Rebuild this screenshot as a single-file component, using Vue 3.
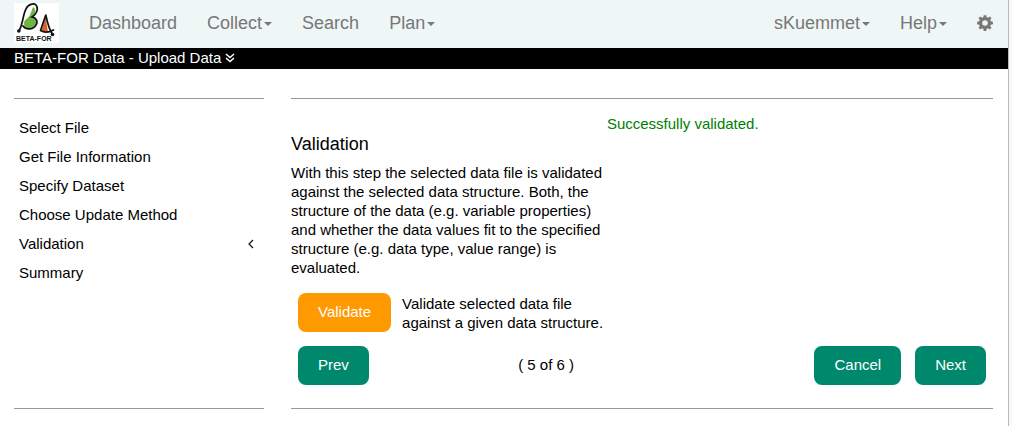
<script setup>
const leftNav = [
  { label: 'Dashboard', menu: false },
  { label: 'Collect', menu: true },
  { label: 'Search', menu: false },
  { label: 'Plan', menu: true },
]
const rightNav = [
  { label: 'sKuemmet', menu: true },
  { label: 'Help', menu: true },
]
const steps = [
  'Select File',
  'Get File Information',
  'Specify Dataset',
  'Choose Update Method',
  'Validation',
  'Summary',
]
const current = 4
</script>

<template>
  <div class="page">
    <header class="navbar">
      <a href="#" class="brand" aria-label="BETA-FOR home">
        <svg width="45" height="40" viewBox="0 0 45 40" aria-hidden="true">
          <rect width="45" height="40" fill="#fff" />
          <path d="M19 4C22 6 22 10 19 13C24 15 23 21 20 23C16 27 10 26 10 21C10 16 14 16 16 12Z" fill="#6fb544" />
          <path d="M5 28C9 21 9 11 12 6C14 1 20 0 22 2C25 6 22 12 18 14C23 15 24 19 22 22C19 27 12 27 9 23" fill="none" stroke="#111" stroke-width="1.7" stroke-linecap="round" />
          <circle cx="4.8" cy="28" r="1.8" fill="#111" />
          <path d="M31.5 14L34 29L27.5 27.5Z" fill="#d9622b" />
          <path d="M38.5 31.5C35 26 33 18 31.8 12L26.5 27.5Q32 31 39.5 27" fill="none" stroke="#111" stroke-width="1.7" stroke-linecap="round" stroke-linejoin="round" />
          <circle cx="38.5" cy="31.5" r="1.8" fill="#111" />
          <text x="2" y="38" class="logo-text">BETA-FOR</text>
        </svg>
      </a>
      <nav class="links" aria-label="Main">
        <a v-for="item in leftNav" :key="item.label" href="#">{{ item.label }}<span v-if="item.menu" class="caret"></span></a>
      </nav>
      <nav class="links account" aria-label="Account">
        <a v-for="item in rightNav" :key="item.label" href="#">{{ item.label }}<span v-if="item.menu" class="caret"></span></a>
        <a href="#" class="gear" aria-label="Settings">
          <svg width="16" height="16" viewBox="0 0 16 16" aria-hidden="true">
            <path fill="#777" fill-rule="evenodd" d="M6.7 0.2H9.3L9.7 2.3L11 2.8L12.8 1.6L14.5 3.3L13.2 5L13.8 6.3L15.9 6.7V9.3L13.8 9.7L13.2 11L14.5 12.8L12.8 14.5L11 13.2L9.7 13.8L9.3 15.9H6.7L6.3 13.8L5 13.2L3.2 14.5L1.5 12.8L2.8 11L2.2 9.7L0.1 9.3V6.7L2.2 6.3L2.8 5L1.5 3.2L3.2 1.5L5 2.8L6.3 2.2ZM8 5.2A2.8 2.8 0 1 0 8 10.8A2.8 2.8 0 1 0 8 5.2Z" />
          </svg>
        </a>
      </nav>
    </header>

    <div class="titlebar">
      <span>BETA-FOR Data - Upload Data</span>
      <svg width="10" height="10" viewBox="0 0 10 10" fill="none" stroke="#fff" stroke-width="1.5" aria-hidden="true">
        <path d="M1 1L5 4.6L9 1M1 5L5 8.6L9 5" />
      </svg>
    </div>

    <div class="content">
      <aside class="sidebar">
        <ul>
          <li v-for="(step, i) in steps" :key="step">
            <span>{{ step }}</span>
            <svg v-if="i === current" width="6" height="10" viewBox="0 0 6 10" fill="none" stroke="#111" stroke-width="1.2" aria-hidden="true">
              <path d="M5 1L1 5L5 9" />
            </svg>
          </li>
        </ul>
      </aside>

      <main class="wizard">
        <div class="columns">
          <section class="explain">
            <h2>Validation</h2>
            <p>
              With this step the selected data file is validated against the selected data structure. Both, the
              structure of the data (e.g. variable properties) and whether the data values fit to the specified
              structure (e.g. data type, value range) is evaluated.
            </p>
            <div class="action">
              <button type="button" class="btn orange">Validate</button>
              <span>Validate selected data file against a given data structure.</span>
            </div>
          </section>
          <p class="status" role="status">Successfully validated.</p>
        </div>
        <footer class="pager">
          <div><button type="button" class="btn">Prev</button></div>
          <span class="count">( 5 of 6 )</span>
          <div class="end">
            <button type="button" class="btn">Cancel</button>
            <button type="button" class="btn">Next</button>
          </div>
        </footer>
      </main>
    </div>
  </div>
</template>

<style>
body {
  background: #f8f8f8;
}
</style>

<style scoped>
.page {
  box-sizing: border-box;
  min-height: 100vh;
  margin-right: 3px;
  border-right: 1px solid #bbb;
  background: #fff;
  color: #000;
  font: 15px/19px "Liberation Sans", Arial, sans-serif;
}

.navbar {
  display: flex;
  align-items: center;
  height: 48px;
  padding: 0 15px 0 14px;
  background: #eef6f6;
}

.brand {
  display: flex;
  margin: 0 30px 2px 0;
}

.logo-text {
  font: bold 7px "Liberation Sans", Arial, sans-serif;
  fill: #111;
}

.links {
  display: flex;
  align-items: center;
  gap: 30px;
  padding-bottom: 2px;
  font-size: 18px;
  line-height: 20px;
}

.links a {
  display: flex;
  align-items: center;
  color: #777;
  text-decoration: none;
}

.account {
  margin-left: auto;
}

.caret {
  margin: 2px 0 0 2px;
  border-top: 4px solid #777;
  border-right: 4px solid transparent;
  border-left: 4px solid transparent;
}

.titlebar {
  display: flex;
  align-items: center;
  gap: 4px;
  padding: 0 14px 2px;
  background: #000;
  color: #fff;
}

.content {
  display: grid;
  grid-template-columns: 250fr 702fr;
  gap: 27px;
  padding: 29px 15px 17px 14px;
}

.sidebar,
.wizard {
  border-top: 1px solid #999;
  border-bottom: 1px solid #999;
}

.sidebar ul {
  margin: 0;
  padding: 14px 10px 0 5px;
  list-style: none;
}

.sidebar li {
  display: flex;
  align-items: center;
  justify-content: space-between;
  height: 29px;
}

.columns {
  display: grid;
  grid-template-columns: 45fr 55fr;
}

h2 {
  margin: 35px 0 9px;
  font-size: 18px;
  font-weight: 400;
  line-height: 20px;
}

.explain p {
  margin: 0 0 16px;
}

.status {
  margin: 15px 0 0;
  color: #008000;
}

.action {
  display: flex;
  align-items: center;
  gap: 11px;
  padding-left: 7px;
}

.btn {
  flex: none;
  height: 39px;
  padding: 0 20px 2px;
  border: 0;
  border-radius: 8px;
  background: #00886c;
  color: #fff;
  font: inherit;
}

.orange {
  background: #ff9900;
}

.pager {
  display: grid;
  grid-template-columns: 32fr 36fr 32fr;
  align-items: center;
  padding: 14px 7px 23px;
}

.count {
  padding-bottom: 2px;
}

.end {
  display: flex;
  justify-content: flex-end;
  gap: 14px;
}
</style>
